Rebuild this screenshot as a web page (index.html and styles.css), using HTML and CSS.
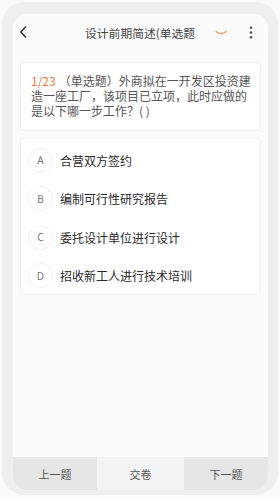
FILE: index.html
```html
<!DOCTYPE html>
<html lang="zh">
<head>
<meta charset="utf-8">
<link rel="stylesheet" href="styles.css">
</head>
<body>
<div class="frame">
  <div class="panel">
    <div class="header">
      <svg class="back" width="8" height="12" viewBox="0 0 8 12"><path d="M6.5 1 L1.8 6 L6.5 11" fill="none" stroke="#333" stroke-width="1.6" stroke-linecap="round" stroke-linejoin="round"/></svg>
      <div class="title">设计前期简述(单选题</div>
      <svg class="fold" width="12" height="6" viewBox="0 0 12 6"><path d="M1 1.5 Q6 6 11 1.5" fill="none" stroke="#f39a68" stroke-width="1.5" stroke-linecap="round"/></svg>
      <svg class="more" width="4" height="13" viewBox="0 0 4 13"><circle cx="2" cy="1.8" r="1.3" fill="#555"/><circle cx="2" cy="6.5" r="1.3" fill="#555"/><circle cx="2" cy="11.2" r="1.3" fill="#555"/></svg>
    </div>
    <div class="question card">
      <span class="num">1/23</span><span class="qtext">（单选题）外商拟在一开发区投资建造一座工厂，该项目已立项，此时应做的是以下哪一步工作？( )</span>
    </div>
    <div class="options card">
      <div class="opt"><span class="badge">A</span><span class="otext">合营双方签约</span></div>
      <div class="opt"><span class="badge">B</span><span class="otext">编制可行性研究报告</span></div>
      <div class="opt"><span class="badge">C</span><span class="otext">委托设计单位进行设计</span></div>
      <div class="opt"><span class="badge">D</span><span class="otext">招收新工人进行技术培训</span></div>
    </div>
    <div class="spacer"></div>
    <div class="bar">
      <div class="btn side">上一题</div>
      <div class="btn mid">交卷</div>
      <div class="btn side">下一题</div>
    </div>
  </div>
</div>
</body>
</html>
```
FILE: styles.css
```css
html, body {
  margin: 0;
  padding: 0;
  background: #fafafa;
  font-family: "Noto Sans CJK SC", "Noto Sans", sans-serif;
}
.frame {
  margin: 2px;
  height: 493px;
  box-sizing: border-box;
  border-radius: 22px;
  background: #efefef;
  padding: 12px 10px 5px 11px;
}
.panel {
  height: 100%;
  display: flex;
  flex-direction: column;
  background: #fbfbfb;
  border-radius: 14px;
  overflow: hidden;
}
.header {
  height: 36px;
  flex: none;
  display: flex;
  align-items: center;
}
.back { margin-left: 6px; }
.title {
  margin-left: 58px;
  font-size: 11.8px;
  color: #444;
  white-space: nowrap;
}
.fold { margin-left: 20px; margin-top: 2px; }
.more { margin-left: 22px; }
.card {
  background: #fff;
  border: 1px solid #f0f0f0;
  border-radius: 3px;
  margin: 0 7px;
}
.question {
  margin-top: 12px;
  padding: 10px 9px 12px 10px;
  font-size: 12px;
  line-height: 15px;
  color: #555;
}
.num {
  display: inline-block;
  color: #f07b45;
  font-size: 12px;
  margin-right: 3px;
}
.options {
  margin-top: 7px;
  padding: 2px 0 0 7px;
  height: 153px;
}
.opt {
  height: 38.5px;
  display: flex;
  align-items: center;
}
.badge {
  width: 23px;
  height: 23px;
  border: 1px solid #f0f0f0;
  border-radius: 50%;
  display: flex;
  align-items: center;
  justify-content: center;
  font-size: 10px;
  color: #777;
  font-family: "Noto Sans", sans-serif;
}
.otext {
  margin-left: 7px;
  font-size: 12px;
  color: #2a2a2a;
  font-weight: 400;
}
.spacer { flex: 1; }
.bar {
  flex: none;
  height: 33px;
  display: grid;
  grid-template-columns: 84px 1fr 84px;
}
.btn {
  display: flex;
  align-items: center;
  justify-content: center;
  font-size: 11px;
  color: #555;
}
.side { background: #e6e6e6; }
.mid { background: #f3f3f3; }
```
